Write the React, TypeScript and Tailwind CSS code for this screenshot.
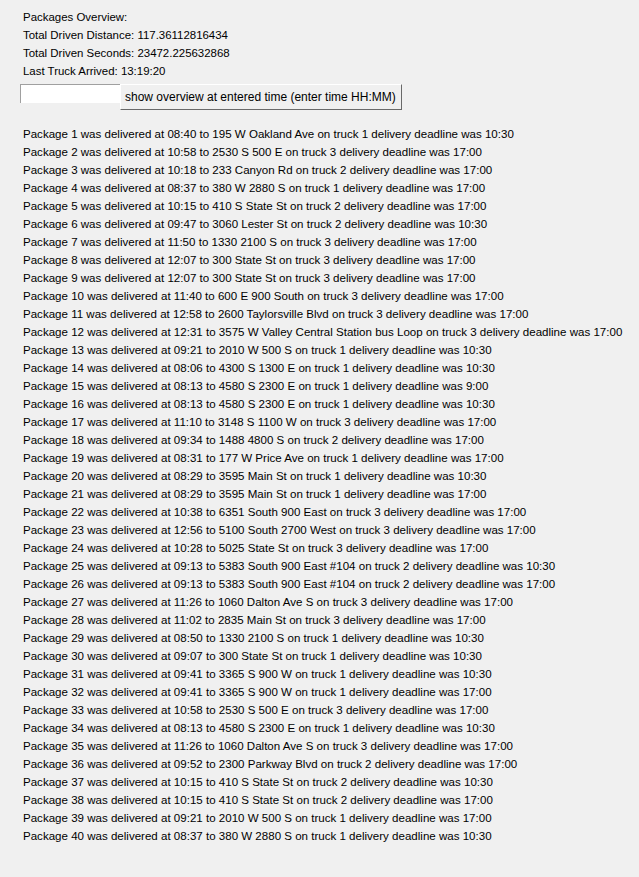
import React from "react";

const pkgs: string[] = [
  "Package 1 was delivered at 08:40 to 195 W Oakland Ave on truck 1 delivery deadline was 10:30",
  "Package 2 was delivered at 10:58 to 2530 S 500 E on truck 3 delivery deadline was 17:00",
  "Package 3 was delivered at 10:18 to 233 Canyon Rd on truck 2 delivery deadline was 17:00",
  "Package 4 was delivered at 08:37 to 380 W 2880 S on truck 1 delivery deadline was 17:00",
  "Package 5 was delivered at 10:15 to 410 S State St on truck 2 delivery deadline was 17:00",
  "Package 6 was delivered at 09:47 to 3060 Lester St on truck 2 delivery deadline was 10:30",
  "Package 7 was delivered at 11:50 to 1330 2100 S on truck 3 delivery deadline was 17:00",
  "Package 8 was delivered at 12:07 to 300 State St on truck 3 delivery deadline was 17:00",
  "Package 9 was delivered at 12:07 to 300 State St on truck 3 delivery deadline was 17:00",
  "Package 10 was delivered at 11:40 to 600 E 900 South on truck 3 delivery deadline was 17:00",
  "Package 11 was delivered at 12:58 to 2600 Taylorsville Blvd on truck 3 delivery deadline was 17:00",
  "Package 12 was delivered at 12:31 to 3575 W Valley Central Station bus Loop on truck 3 delivery deadline was 17:00",
  "Package 13 was delivered at 09:21 to 2010 W 500 S on truck 1 delivery deadline was 10:30",
  "Package 14 was delivered at 08:06 to 4300 S 1300 E on truck 1 delivery deadline was 10:30",
  "Package 15 was delivered at 08:13 to 4580 S 2300 E on truck 1 delivery deadline was 9:00",
  "Package 16 was delivered at 08:13 to 4580 S 2300 E on truck 1 delivery deadline was 10:30",
  "Package 17 was delivered at 11:10 to 3148 S 1100 W on truck 3 delivery deadline was 17:00",
  "Package 18 was delivered at 09:34 to 1488 4800 S on truck 2 delivery deadline was 17:00",
  "Package 19 was delivered at 08:31 to 177 W Price Ave on truck 1 delivery deadline was 17:00",
  "Package 20 was delivered at 08:29 to 3595 Main St on truck 1 delivery deadline was 10:30",
  "Package 21 was delivered at 08:29 to 3595 Main St on truck 1 delivery deadline was 17:00",
  "Package 22 was delivered at 10:38 to 6351 South 900 East on truck 3 delivery deadline was 17:00",
  "Package 23 was delivered at 12:56 to 5100 South 2700 West on truck 3 delivery deadline was 17:00",
  "Package 24 was delivered at 10:28 to 5025 State St on truck 3 delivery deadline was 17:00",
  "Package 25 was delivered at 09:13 to 5383 South 900 East #104 on truck 2 delivery deadline was 10:30",
  "Package 26 was delivered at 09:13 to 5383 South 900 East #104 on truck 2 delivery deadline was 17:00",
  "Package 27 was delivered at 11:26 to 1060 Dalton Ave S on truck 3 delivery deadline was 17:00",
  "Package 28 was delivered at 11:02 to 2835 Main St on truck 3 delivery deadline was 17:00",
  "Package 29 was delivered at 08:50 to 1330 2100 S on truck 1 delivery deadline was 10:30",
  "Package 30 was delivered at 09:07 to 300 State St on truck 1 delivery deadline was 10:30",
  "Package 31 was delivered at 09:41 to 3365 S 900 W on truck 1 delivery deadline was 10:30",
  "Package 32 was delivered at 09:41 to 3365 S 900 W on truck 1 delivery deadline was 17:00",
  "Package 33 was delivered at 10:58 to 2530 S 500 E on truck 3 delivery deadline was 17:00",
  "Package 34 was delivered at 08:13 to 4580 S 2300 E on truck 1 delivery deadline was 10:30",
  "Package 35 was delivered at 11:26 to 1060 Dalton Ave S on truck 3 delivery deadline was 17:00",
  "Package 36 was delivered at 09:52 to 2300 Parkway Blvd on truck 2 delivery deadline was 17:00",
  "Package 37 was delivered at 10:15 to 410 S State St on truck 2 delivery deadline was 10:30",
  "Package 38 was delivered at 10:15 to 410 S State St on truck 2 delivery deadline was 17:00",
  "Package 39 was delivered at 09:21 to 2010 W 500 S on truck 1 delivery deadline was 17:00",
  "Package 40 was delivered at 08:37 to 380 W 2880 S on truck 1 delivery deadline was 10:30",
];

export default function App() {
  return (
    <div
      className="w-[639px] h-[877px] bg-[#f0f0f0] text-black text-[11.55px] leading-[18px] overflow-hidden"
      style={{ fontFamily: '"Liberation Sans", Arial, sans-serif' }}
    >
      <div className="pl-[23px] pt-[8px] text-[11.45px]">
        <div>Packages Overview:</div>
        <div>Total Driven Distance: 117.36112816434</div>
        <div>Total Driven Seconds: 23472.225632868</div>
        <div>Last Truck Arrived: 13:19:20</div>
      </div>
      <div className="flex items-start pl-[20px] mt-[4px]">
        <div className="w-[100px] h-[19px] bg-white border-t border-l border-[#a0a0a0]" />
        <button className="h-[26px] pl-[4px] pr-[5px] bg-[#f0f0f0] border border-t-white border-l-white border-r-[#696969] border-b-[#696969] text-[12px] leading-[18px] whitespace-nowrap">
          show overview at entered time (enter time HH:MM)
        </button>
      </div>
      <div className="pl-[23px] mt-[15px]">
        {pkgs.map((p) => (
          <div key={p} className="whitespace-nowrap">{p}</div>
        ))}
      </div>
    </div>
  );
}
